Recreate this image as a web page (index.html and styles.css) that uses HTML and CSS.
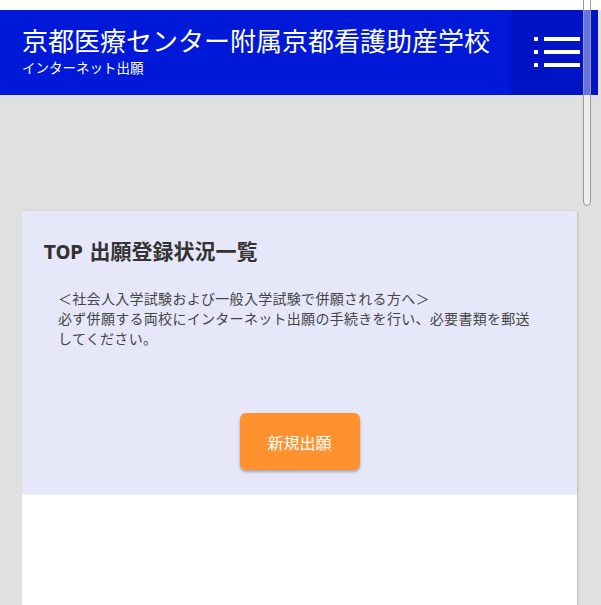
FILE: index.html
```html
<!DOCTYPE html>
<html lang="ja">
<head>
    <meta charset="UTF-8">
    <meta name="viewport" content="width=device-width, initial-scale=1.0">
    <title>インターネット出願</title>
    <link rel="stylesheet" href="styles.css">
</head>
<body>

    <div class="top-strip"></div>

    <!-- Header -->
    <header class="site-header">
        <div class="brand">
            <h1>京都医療センター附属京都看護助産学校</h1>
            <p>インターネット出願</p>
        </div>
        <button class="menu-btn" aria-label="menu">
            <svg width="46" height="36" viewBox="0 0 46 36">
                <rect x="0" y="3" width="4" height="4" fill="#fff"/>
                <rect x="10" y="3" width="36" height="4" fill="#fff"/>
                <rect x="0" y="16" width="4" height="4" fill="#fff"/>
                <rect x="10" y="16" width="36" height="4" fill="#fff"/>
                <rect x="0" y="29" width="4" height="4" fill="#fff"/>
                <rect x="10" y="29" width="36" height="4" fill="#fff"/>
            </svg>
        </button>
    </header>

    <!-- Main card -->
    <main class="content">
        <div class="card">
            <div class="card-top">
                <h2><span class="top-label">TOP</span> 出願登録状況一覧</h2>
                <p class="notice">
                    ＜社会人入学試験および一般入学試験で併願される方へ＞<br>
                    必ず併願する両校にインターネット出願の手続きを行い、必要書類を郵送してください。
                </p>
                <div class="actions">
                    <button class="new-btn">新規出願</button>
                </div>
            </div>
            <div class="card-body"></div>
        </div>
    </main>

    <div class="scrollbar"></div>

</body>
</html>
```

FILE: styles.css
```css
/* Basic Reset */
* {
    margin: 0;
    padding: 0;
    box-sizing: border-box;
}

body {
    font-family: "Noto Sans CJK JP", "Noto Sans", sans-serif;
    background-color: #e0e0e0;
    height: 605px;
    overflow: hidden;
}

.top-strip {
    height: 10px;
    background-color: #ffffff;
}

.site-header {
    display: flex;
    justify-content: space-between;
    height: 85px;
    margin-right: 3px;
    background-color: #0019d8;
    color: #ffffff;
}

.brand {
    padding: 12px 0 0 22px;
}

.brand h1 {
    font-size: 26px;
    font-weight: 400;
    line-height: 36px;
}

.brand p {
    font-size: 13.5px;
    line-height: 18px;
}

.menu-btn {
    width: 87px;
    border: none;
    background-color: #0014c6;
    display: flex;
    padding: 24px 0 0 23px;
}

.content {
    padding: 116px 24px 0 22px;
}

.card {
    background-color: #ffffff;
    border-radius: 4px 4px 0 0;
    box-shadow: 1px 0 2px rgba(0, 0, 0, 0.15);
    height: 400px;
}

.card-top {
    background-color: #e6e8fa;
    border-radius: 4px 4px 0 0;
    padding: 24px 22px 24px 22px;
    border-bottom: 1px solid #eeeefa;
}

.card-top h2 {
    font-size: 21px;
    font-weight: 700;
    color: #333333;
    line-height: 30px;
}

.top-label {
    font-family: "DejaVu Sans Condensed", "Liberation Sans Narrow", sans-serif;
    font-size: 19px;
    font-weight: 700;
    margin-right: 2px;
}

.notice {
    margin: 21px 22px 0 14px;
    font-size: 14px;
    letter-spacing: 0.3px;
    line-height: 20px;
    color: #444444;
}

.actions {
    display: flex;
    justify-content: center;
    margin-top: 65px;
}

.new-btn {
    width: 120px;
    height: 57px;
    border: none;
    border-radius: 6px;
    background-color: #ff922e;
    color: #ffffff;
    font-family: inherit;
    font-size: 16px;
    box-shadow: 0 2px 3px rgba(0, 0, 0, 0.3);
    cursor: pointer;
}

/* overlay scrollbar drawn above the page */
.scrollbar {
    position: absolute;
    top: -4px;
    left: 583px;
    width: 8px;
    height: 210px;
    border: 1px solid #9a9a9a;
    border-radius: 4px;
    background-color: rgba(255, 255, 255, 0.4);
}
```
